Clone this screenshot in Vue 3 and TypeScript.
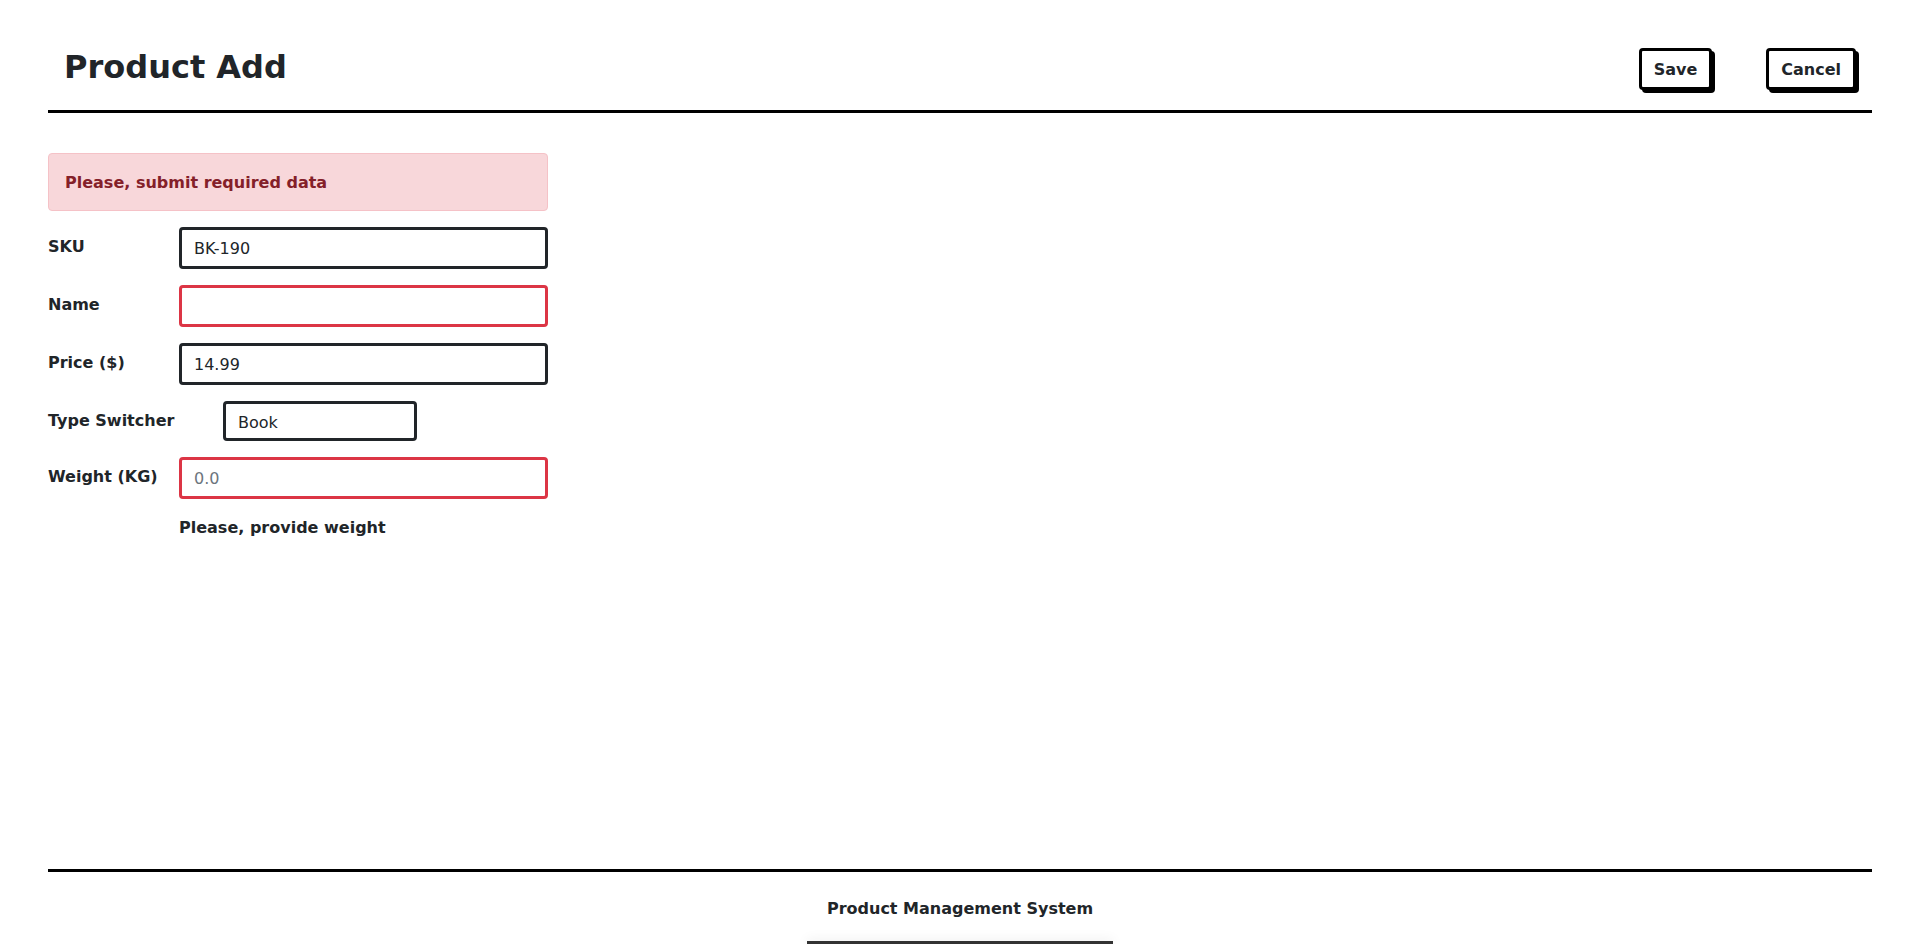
<script setup lang="ts">
import { ref } from 'vue'

type ProductType = 'DVD' | 'Book' | 'Furniture'

const sku = ref('BK-190')
const name = ref('')
const price = ref('14.99')
const productType = ref<ProductType>('Book')
const weight = ref('')
const types: ProductType[] = ['DVD', 'Book', 'Furniture']
</script>

<template>
  <div class="page">
    <header class="header">
      <h1 class="title">Product Add</h1>
      <div class="actions">
        <button class="btn" type="submit" form="product_form">Save</button>
        <button class="btn" type="button">Cancel</button>
      </div>
    </header>

    <main class="content">
      <form id="product_form" class="form" novalidate @submit.prevent>
        <div class="alert" role="alert">Please, submit required data</div>
        <div class="row">
          <label class="label" for="sku">SKU</label>
          <input id="sku" v-model="sku" class="control" type="text" />
        </div>
        <div class="row">
          <label class="label" for="name">Name</label>
          <input id="name" v-model="name" class="control invalid" type="text" />
        </div>
        <div class="row">
          <label class="label" for="price">Price ($)</label>
          <input id="price" v-model="price" class="control" type="text" />
        </div>
        <div class="row row-switcher">
          <label class="label" for="productType">Type Switcher</label>
          <select id="productType" v-model="productType" class="control select">
            <option v-for="t in types" :key="t" :value="t">{{ t }}</option>
          </select>
        </div>
        <div class="row">
          <label class="label" for="weight">Weight (KG)</label>
          <input id="weight" v-model="weight" class="control invalid" type="text" placeholder="0.0" aria-describedby="weight-help" />
        </div>
        <p id="weight-help" class="help">Please, provide weight</p>
      </form>
    </main>

    <footer class="footer">
      <p class="footer-text">Product Management System</p>
      <div class="footer-bar"></div>
    </footer>
  </div>
</template>

<style>
body {
  margin: 0;
  background: #fff;
}
</style>

<style scoped>
.page,
.page * {
  box-sizing: border-box;
}

.page {
  display: flex;
  flex-direction: column;
  min-height: 100vh;
  padding: 0 48px;
  overflow: hidden;
  color: #212529;
  font-family: "DejaVu Sans", sans-serif;
  font-size: 16px;
  font-weight: 700;
  line-height: 25px;
}

.header {
  display: flex;
  align-items: flex-start;
  justify-content: space-between;
  padding: 48px 16px 20px;
  border-bottom: 3px solid #000;
}

.title {
  margin: 0;
  font-size: 32px;
  line-height: 38px;
}

.actions {
  display: flex;
  gap: 54px;
}

.btn {
  padding: 6px 12px 5px;
  border: 3px solid #000;
  border-radius: 4px;
  background: #fff;
  box-shadow: 3px 3px #000;
  color: inherit;
  font: inherit;
  cursor: pointer;
}

.content {
  flex: 1;
  padding: 40px 0;
}

.form {
  display: flex;
  flex-direction: column;
  gap: 16px;
  max-width: 500px;
}

.alert {
  padding: 16px 16px 15px;
  border: 1px solid #f5c2c7;
  border-radius: 4px;
  background: #f8d7da;
  color: #842029;
}

.row {
  display: grid;
  grid-template-columns: 131px 1fr;
  align-items: start;
}

.row-switcher {
  grid-template-columns: 175px 194px;
}

.label {
  padding-top: 7px;
}

.control {
  width: 100%;
  min-width: 0;
  margin: 0;
  padding: 6px 12px 5px;
  border: 3px solid #212529;
  border-radius: 4px;
  outline: none;
  background: #fff;
  color: #212529;
  font: inherit;
  font-weight: 400;
}

.control::placeholder {
  color: #6c757d;
  opacity: 1;
}

.select {
  appearance: none;
  padding-bottom: 3px;
}

.invalid {
  border-color: #dc3545;
}

.help {
  margin: 0;
  padding-left: 131px;
}

.footer {
  display: flex;
  flex-direction: column;
  align-items: center;
  border-top: 3px solid #000;
}

.footer-text {
  margin: 0;
  padding: 24px 20px 20px;
}

.footer-bar {
  width: 306px;
  height: 3px;
  background: #333;
  box-shadow: 0 0 12px rgba(0, 0, 0, 0.15);
}
</style>
